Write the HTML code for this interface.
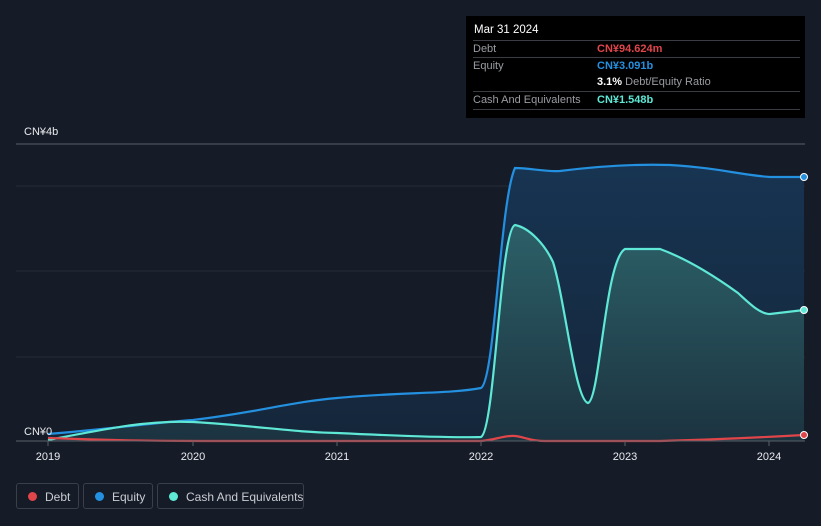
<!DOCTYPE html>
<html><head><meta charset="utf-8"><style>
body{margin:0;width:821px;height:526px;background:#161c27;font-family:"Liberation Sans",sans-serif;overflow:hidden;position:relative}
.tip{position:absolute;left:466px;top:16px;width:339px;height:102px;background:#000;color:#fff;font-size:11px}
.tip .h{position:absolute;left:8px;top:8px;font-size:11.5px}
.row{position:absolute;left:7px;width:327px;height:17px;border-top:1px solid #3a3d44;line-height:17px;white-space:nowrap}
.row span{position:absolute;left:124px;font-weight:bold}
.lab{color:#9a9ca2}
.leg{position:absolute;top:483px;height:26px;border:1px solid #3a3f4a;border-radius:3px;color:#c9ccd2;font-size:12px;line-height:26px;box-sizing:border-box;white-space:nowrap}
.leg i{position:absolute;top:8px;left:11px;width:9px;height:9px;border-radius:50%}
.leg b{font-weight:normal;position:absolute;left:28px;white-space:nowrap}
</style></head><body>
<svg width="821" height="526" style="position:absolute;left:0;top:0">
<defs>
<linearGradient id="eq" x1="0" y1="0" x2="0" y2="1"><stop offset="0" stop-color="#173452"/><stop offset="1" stop-color="#15263a"/></linearGradient>
<linearGradient id="cs" x1="0" y1="0" x2="0" y2="1"><stop offset="0" stop-color="#2c6068"/><stop offset="1" stop-color="#1c3340"/></linearGradient>
</defs>
<line x1="16" y1="144" x2="805" y2="144" stroke="#5a5f68" stroke-width="1"/>
<line x1="16" y1="186" x2="805" y2="186" stroke="#262c37"/>
<line x1="16" y1="271" x2="805" y2="271" stroke="#262c37"/>
<line x1="16" y1="357" x2="805" y2="357" stroke="#262c37"/>
<path d="M48,434 C120,428 160,422 193,420 C260,412 290,402 337,398 C400,392 450,394 481,388 C495,380 500,200 515,168 C530,168 545,172 560,171 C600,166 640,164 670,165 C720,168 740,175 770,177 L804,177 L804,441 L48,441Z" fill="url(#eq)"/>
<path d="M48,440 C110,428 150,420 193,422 C260,426 290,432 337,433 C400,436 450,438 481,437 C495,430 500,230 515,225 C530,228 545,245 553,262 C565,300 575,400 588,403 C600,400 605,260 625,249 L660,249 C690,260 720,280 738,293 C750,304 760,314 770,314 L804,310 L804,441 L48,441Z" fill="url(#cs)"/>
<path d="M48,434 C120,428 160,422 193,420 C260,412 290,402 337,398 C400,392 450,394 481,388 C495,380 500,200 515,168 C530,168 545,172 560,171 C600,166 640,164 670,165 C720,168 740,175 770,177 L804,177" fill="none" stroke="#2490e0" stroke-width="2.2"/>
<path d="M48,440 C110,428 150,420 193,422 C260,426 290,432 337,433 C400,436 450,438 481,437 C495,430 500,230 515,225 C530,228 545,245 553,262 C565,300 575,400 588,403 C600,400 605,260 625,249 L660,249 C690,260 720,280 738,293 C750,304 760,314 770,314 L804,310" fill="none" stroke="#5ee8d5" stroke-width="2.2"/>
<path d="M48,438 C100,440 150,441 200,441 L481,441 C495,440 505,435 515,436 C525,437 530,441 545,441 L660,441 C700,440 750,438 804,435" fill="none" stroke="#e0454a" stroke-width="2.2"/>
<line x1="16" y1="441" x2="805" y2="441" stroke="#5a5f68"/>
<g stroke="#5a5f68"><line x1="48" y1="441" x2="48" y2="446"/><line x1="193" y1="441" x2="193" y2="446"/><line x1="337" y1="441" x2="337" y2="446"/><line x1="481" y1="441" x2="481" y2="446"/><line x1="625" y1="441" x2="625" y2="446"/><line x1="769" y1="441" x2="769" y2="446"/></g>
<circle cx="804" cy="177" r="3.5" fill="#2490e0" stroke="#fff" stroke-width="1"/>
<circle cx="804" cy="310" r="3.5" fill="#5ee8d5" stroke="#fff" stroke-width="1"/>
<circle cx="804" cy="435" r="3.5" fill="#e0454a" stroke="#fff" stroke-width="1"/>
<g fill="#e8eaee" font-size="11" font-family="Liberation Sans,sans-serif">
<text x="24" y="135">CN¥4b</text><text x="24" y="435">CN¥0</text>
<g text-anchor="middle"><text x="48" y="460">2019</text><text x="193" y="460">2020</text><text x="337" y="460">2021</text><text x="481" y="460">2022</text><text x="625" y="460">2023</text><text x="769" y="460">2024</text></g>
</g>
</svg>
<div class="tip"><div class="h">Mar 31 2024</div>
<div class="row lab" style="top:24px">Debt<span style="color:#e0454a">CN¥94.624m</span></div>
<div class="row lab" style="top:41px">Equity<span style="color:#2490e0">CN¥3.091b</span></div>
<div class="row lab" style="top:58px;border-top:none"><span style="color:#fff">3.1% <b style="font-weight:normal;color:#9a9ca2">Debt/Equity Ratio</b></span></div>
<div class="row lab" style="top:75px">Cash And Equivalents<span style="color:#5ee8d5">CN¥1.548b</span></div>
<div class="row" style="top:93px;height:0"></div>
</div>
<div class="leg" style="left:16px;width:63px"><i style="background:#e0454a"></i><b>Debt</b></div>
<div class="leg" style="left:83px;width:70px"><i style="background:#2490e0"></i><b>Equity</b></div>
<div class="leg" style="left:157px;width:147px"><i style="background:#5ee8d5"></i><b>Cash And Equivalents</b></div>
</body></html>
